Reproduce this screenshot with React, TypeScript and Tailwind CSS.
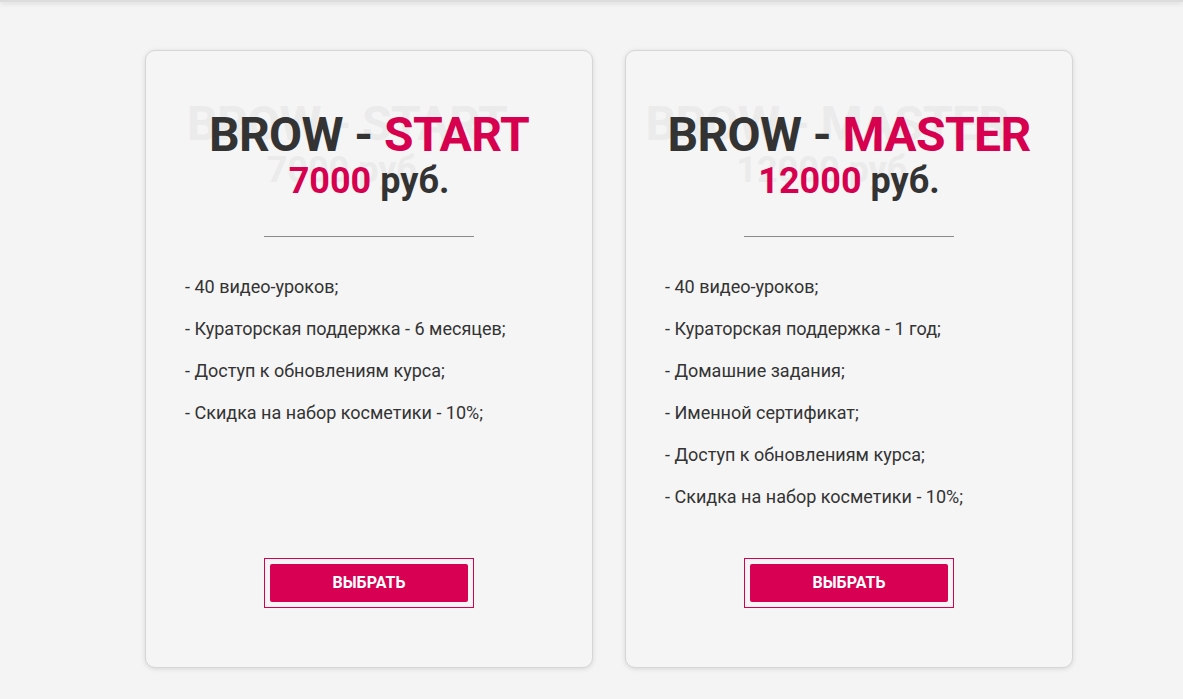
import React from "react";

type Plan = {
  name: string;
  price: string;
  items: string[];
};

const plans: Plan[] = [
  {
    name: "START",
    price: "7000",
    items: [
      "- 40 видео-уроков;",
      "- Кураторская поддержка - 6 месяцев;",
      "- Доступ к обновлениям курса;",
      "- Скидка на набор косметики - 10%;",
    ],
  },
  {
    name: "MASTER",
    price: "12000",
    items: [
      "- 40 видео-уроков;",
      "- Кураторская поддержка - 1 год;",
      "- Домашние задания;",
      "- Именной сертификат;",
      "- Доступ к обновлениям курса;",
      "- Скидка на набор косметики - 10%;",
    ],
  },
];

function Heading({ plan, ghost }: { plan: Plan; ghost?: boolean }) {
  const accent = ghost ? "" : "text-[#d6004f]";
  return (
    <div className={`whitespace-nowrap text-center font-bold ${ghost ? "text-[#ebebeb]" : "text-[#333]"}`}>
      <div className="text-[48px] leading-[48px] tracking-[-0.6px]">
        BROW - <span className={accent}>{plan.name}</span>
      </div>
      <div className="mt-[4px] text-[36px] leading-[36px]">
        <span className={accent}>{plan.price}</span> руб.
      </div>
    </div>
  );
}

function PlanCard({ plan }: { plan: Plan }) {
  return (
    <div className="flex h-[618px] w-[448px] flex-col items-center rounded-[10px] border border-[#d6d6d6] bg-[#f5f5f5] px-[39px] pb-[59px] pt-[60px] shadow-[0_1px_5px_rgba(0,0,0,0.12)]">
      {/* заголовок + цена; светлая копия сзади со сдвигом */}
      <div className="relative">
        <div className="absolute left-[-22px] top-[-11px]" aria-hidden>
          <Heading plan={plan} ghost />
        </div>
        <div className="relative">
          <Heading plan={plan} />
        </div>
      </div>

      <div className="mt-[37px] h-px w-[210px] bg-[#8a8a8a]" />

      <ul className="mt-[38px] flex w-full flex-col gap-[18px] text-[18px] leading-[24px] text-[#333]">
        {plan.items.map((it) => (
          <li key={it}>{it}</li>
        ))}
      </ul>

      <div className="mt-auto border border-[#d6004f] p-[5px]">
        <button
          type="button"
          className="flex h-[38px] w-[198px] items-center justify-center rounded-[2px] bg-[#d80052] text-[16px] font-bold text-white"
        >
          ВЫБРАТЬ
        </button>
      </div>
    </div>
  );
}

export default function App() {
  return (
    <div
      className="relative min-h-[699px] bg-[#f4f4f4]"
      style={{ fontFamily: "Roboto, 'Noto Sans', sans-serif" }}
    >
      <div className="h-[2px] bg-[#dcdcdc] shadow-[0_1px_5px_rgba(0,0,0,0.18)]" />
      <div className="flex gap-[32px] pl-[145px] pt-[48px]">
        {plans.map((p) => (
          <PlanCard key={p.name} plan={p} />
        ))}
      </div>
    </div>
  );
}
